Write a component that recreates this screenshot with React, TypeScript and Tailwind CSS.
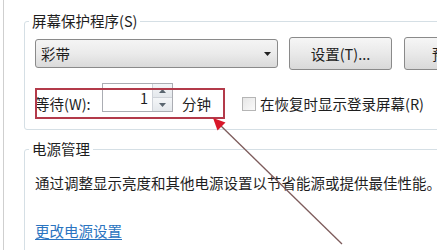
const font = "font-['Noto_Sans_CJK_SC','Noto_Sans',sans-serif]";

function Btn({ label, className = '' }: { label: string; className?: string }) {
  return (
    <div
      className={`h-[33px] w-[103px] shrink-0 flex items-center justify-center rounded-[3px] border border-[#8a8a8a] bg-gradient-to-b from-[#f6f6f6] via-[#e9e9e9] to-[#d9d9d9] text-[14.5px] leading-[20px] text-[#1e1e1e] ${className}`}
    >
      {label}
    </div>
  );
}

function Spinner() {
  return (
    <div className="flex h-[29px] w-[71px] shrink-0 border border-[#abadb3] bg-white">
      <div className="flex-1 flex items-center justify-end pr-[4px] text-[14.5px] leading-[20px] text-[#1e1e1e]">1</div>
      <div className="flex w-[20px] flex-col border-l border-[#cfd3d9]">
        <div className="flex flex-1 items-center justify-center border-b border-[#cfd3d9] bg-gradient-to-b from-[#f4f6f8] to-[#e4e8ec]">
          <svg width="7" height="4" viewBox="0 0 7 4">
            <path d="M0 4 L3.5 0 L7 4 Z" fill="#5a6670" />
          </svg>
        </div>
        <div className="flex flex-1 items-center justify-center bg-gradient-to-b from-[#f4f6f8] to-[#e4e8ec]">
          <svg width="7" height="4" viewBox="0 0 7 4">
            <path d="M0 0 L7 0 L3.5 4 Z" fill="#5a6670" />
          </svg>
        </div>
      </div>
    </div>
  );
}

export default function App() {
  return (
    <div className={`relative flex h-[250px] w-[437px] overflow-hidden bg-white pl-[3px] ${font}`}>
      <div className="flex-1 border-l border-[#cfcfcf] pl-[20px]">
        {/* screen saver group */}
        <fieldset className="mt-[11px] w-[440px] rounded-[3px] border border-[#d5dfe5] pb-[15px] pl-[10px]">
          <legend className="ml-[-6px] px-[3px] text-[14.5px] leading-[20px] text-[#1e1e1e]">屏幕保护程序(S)</legend>

          <div className="mt-[6px] flex h-[33px] items-center">
            <div className="flex h-[29px] w-[243px] shrink-0 items-center justify-between rounded-[3px] border border-[#8a8a8a] bg-gradient-to-b from-[#f4f4f4] via-[#ebebeb] to-[#dadada] pl-[5px] pr-[6px]">
              <span className="text-[14.5px] leading-[20px] text-[#1e1e1e]">彩带</span>
              <svg width="7" height="4" viewBox="0 0 7 4">
                <path d="M0 0 L7 0 L3.5 4 Z" fill="#222" />
              </svg>
            </div>
            <Btn label="设置(T)..." className="ml-[11px]" />
            <Btn label="预览(V)" className="ml-[12px]" />
          </div>

          <div className="mt-[13px] flex h-[31px] items-start text-[14.5px] leading-[20px] text-[#1e1e1e]">
            <span className="mt-[11px] w-[67px] shrink-0">等待(W):</span>
            <Spinner />
            <span className="ml-[9px] mt-[11px] shrink-0">分钟</span>
            <div className="ml-[31px] mt-[11px] flex h-[20px] shrink-0 items-center">
              <div className="h-[14px] w-[14px] border border-[#b5b5b5] bg-gradient-to-br from-[#e6e6e6] to-[#fafafa]" />
              <span className="ml-[4px]">在恢复时显示登录屏幕(R)</span>
            </div>
          </div>
        </fieldset>

        {/* power group */}
        <fieldset className="mt-[9px] h-[140px] w-[440px] rounded-[3px] border border-[#d5dfe5] pl-[10px]">
          <legend className="ml-[-6px] px-[3px] text-[14.5px] leading-[20px] text-[#1e1e1e]">电源管理</legend>
          <p className="mt-[14px] whitespace-nowrap text-[14.5px] leading-[20px] text-[#1e1e1e]">
            通过调整显示亮度和其他电源设置以节省能源或提供最佳性能。
          </p>
          <p className="mt-[28px] text-[14.5px] leading-[20px] text-[#2a74c0] underline underline-offset-2">更改电源设置</p>
        </fieldset>
      </div>

      {/* annotation: red box + arrow */}
      <div className="pointer-events-none absolute left-[35px] top-[88px] h-[31px] w-[190px] border-2 border-[#b33a4a]" />
      <svg className="pointer-events-none absolute left-0 top-0" width="437" height="250" viewBox="0 0 437 250">
        <line x1="342" y1="244" x2="219" y2="124" stroke="#7d5b5b" strokeWidth="1.3" />
        <path d="M213 118 L225.5 122.5 L217.5 130.5 Z" fill="#d8182a" />
      </svg>
    </div>
  );
}
